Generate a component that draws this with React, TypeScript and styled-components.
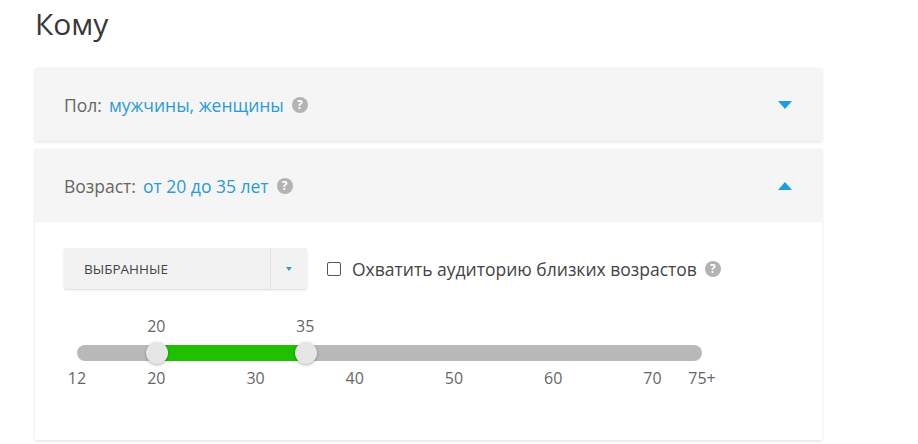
import React from "react";
import styled, { createGlobalStyle } from "styled-components";

const Global = createGlobalStyle`
  html, body { margin: 0; padding: 0; background: #fff; }
  body { font-family: "Open Sans", "Noto Sans", sans-serif; }
`;

const Page = styled.div`
  padding: 4px 96px 0 35px;
  width: 787px;
`;

const Title = styled.h1`
  margin: 0 0 24px;
  font-size: 30px;
  line-height: 40px;
  font-weight: 400;
  color: #383838;
`;

const Card = styled.section`
  background: #fff;
  box-shadow: 0 1px 3px rgba(0, 0, 0, 0.13);
  margin-bottom: 8px;
`;

const Header = styled.div`
  display: flex;
  align-items: center;
  height: 73px;
  padding: 0 30px 0 29px;
  background: #f5f5f5;
  font-size: 17.5px;
`;

const Label = styled.span`
  color: #666;
  margin-right: 7px;
`;

const Value = styled.span`
  color: #2a9bd7;
`;

const Help = styled.span`
  display: inline-flex;
  align-items: center;
  justify-content: center;
  width: 16px;
  height: 16px;
  border-radius: 50%;
  background: #b3b3b3;
  color: #fff;
  font-size: 12px;
  font-weight: 700;
  margin-left: 8px;
  line-height: 1;
`;

const Spacer = styled.div`
  flex: 1;
`;

const Caret = styled.span<{ $up?: boolean }>`
  width: 0;
  height: 0;
  border-left: 7px solid transparent;
  border-right: 7px solid transparent;
  ${(p) =>
    p.$up ? "border-bottom: 8px solid #1a9fe3;" : "border-top: 8px solid #1a9fe3;"}
`;

const Body = styled.div`
  padding: 26px 29px 52px;
`;

const Controls = styled.div`
  display: flex;
  align-items: center;
`;

const Select = styled.div`
  display: flex;
  width: 243px;
  height: 41px;
  box-sizing: border-box;
  background: #f2f2f2;
  border-radius: 2px;
  box-shadow: 0 1px 2px rgba(0, 0, 0, 0.15);
`;

const SelectText = styled.div`
  flex: 1;
  display: flex;
  align-items: center;
  padding-left: 20px;
  font-size: 13.5px;
  color: #444;
  text-transform: uppercase;
`;

const SelectArrow = styled.div`
  width: 36px;
  display: flex;
  align-items: center;
  justify-content: center;
  border-left: 1px solid #e2e2e2;
  &::after {
    content: "";
    border-left: 3px solid transparent;
    border-right: 3px solid transparent;
    border-top: 4px solid #2a9bd7;
  }
`;

const Check = styled.label`
  display: flex;
  align-items: center;
  margin-left: 20px;
  font-size: 17.5px;
  color: #444;
`;

const Box = styled.span`
  width: 14px;
  height: 14px;
  box-sizing: border-box;
  border: 1.5px solid #555;
  border-radius: 2px;
  margin-right: 11px;
  background: #fff;
`;

const Slider = styled.div`
  position: relative;
  width: 625px;
  margin: 27px 0 0 13px;
  padding-top: 29px;
`;

const Track = styled.div`
  position: relative;
  height: 16px;
  border-radius: 8px;
  background: #b9b9b9;
`;

const Fill = styled.div`
  position: absolute;
  top: 0;
  bottom: 0;
  background: #1ec000;
`;

const Thumb = styled.div`
  position: absolute;
  top: 50%;
  width: 22px;
  height: 22px;
  margin: -11px 0 0 -10px;
  border-radius: 50%;
  background: #e6e6e6;
  box-shadow: 0 1px 3px rgba(0, 0, 0, 0.3);
`;

const Bubble = styled.div`
  position: absolute;
  top: 0;
  transform: translateX(-50%);
  font-size: 16px;
  line-height: 20px;
  color: #666;
`;

const Ticks = styled.div`
  position: relative;
  height: 20px;
  margin-top: 7px;
`;

const Tick = styled.span`
  position: absolute;
  top: 0;
  transform: translateX(-50%);
  font-size: 16px;
  line-height: 20px;
  color: #666;
  white-space: nowrap;
`;

const MIN = 12;
const MAX = 75;
const pct = (v: number) => `${((v - MIN) / (MAX - MIN)) * 100}%`;

export default function App() {
  const from = 20;
  const to = 35;
  const ticks: [number, string][] = [
    [12, "12"],
    [20, "20"],
    [30, "30"],
    [40, "40"],
    [50, "50"],
    [60, "60"],
    [70, "70"],
    [75, "75+"],
  ];
  return (
    <>
      <Global />
      <Page>
        <Title>Кому</Title>
        <Card>
          <Header>
            <Label>Пол:</Label>
            <Value>мужчины, женщины</Value>
            <Help>?</Help>
            <Spacer />
            <Caret />
          </Header>
        </Card>
        <Card>
          <Header>
            <Label>Возраст:</Label>
            <Value>от 20 до 35 лет</Value>
            <Help>?</Help>
            <Spacer />
            <Caret $up />
          </Header>
          <Body>
            <Controls>
              <Select>
                <SelectText>Выбранные</SelectText>
                <SelectArrow />
              </Select>
              <Check>
                <Box />
                Охватить аудиторию близких возрастов
                <Help>?</Help>
              </Check>
            </Controls>
            <Slider>
              <Bubble style={{ left: pct(from) }}>{from}</Bubble>
              <Bubble style={{ left: pct(to) }}>{to}</Bubble>
              <Track>
                <Fill style={{ left: pct(from), width: `calc(${pct(to)} - ${pct(from)})` }} />
                <Thumb style={{ left: pct(from) }} />
                <Thumb style={{ left: pct(to) }} />
              </Track>
              <Ticks>
                {ticks.map(([v, t]) => (
                  <Tick key={v} style={{ left: pct(v) }}>
                    {t}
                  </Tick>
                ))}
              </Ticks>
            </Slider>
          </Body>
        </Card>
      </Page>
    </>
  );
}
